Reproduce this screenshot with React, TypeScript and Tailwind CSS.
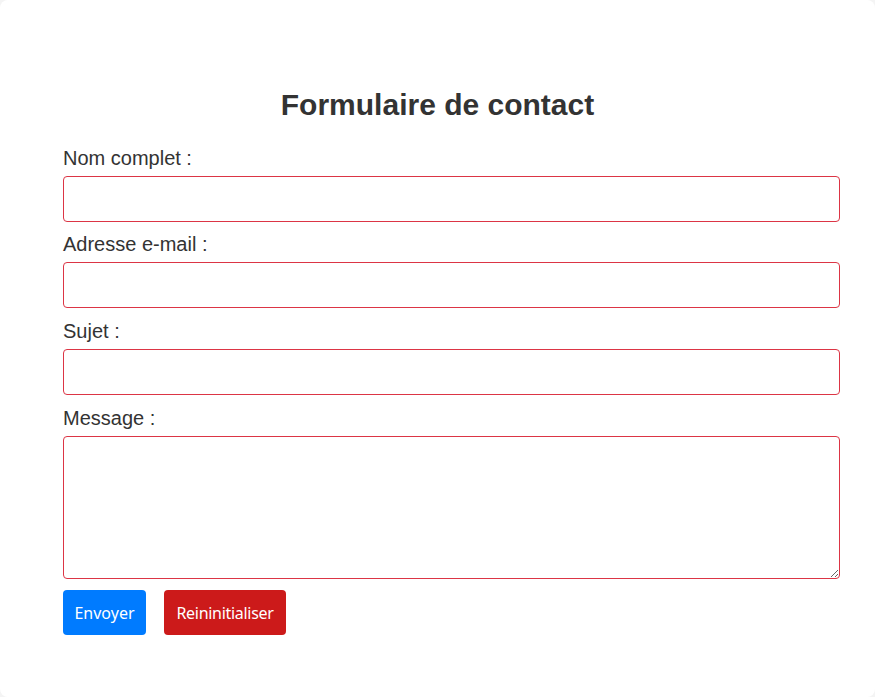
export default function App() {
  const fields = [
    { id: "nom", label: "Nom complet :", type: "text", gap: "mb-[12px]" },
    { id: "email", label: "Adresse e-mail :", type: "email", gap: "mb-[13px]" },
    { id: "sujet", label: "Sujet :", type: "text", gap: "mb-[13px]" },
  ];

  return (
    <div className="min-h-screen bg-[#f4f4f4] font-['Liberation_Sans',Arial,sans-serif] text-[#333]">
      <div className="h-[697px] w-full rounded-lg bg-white px-[63px] pt-[88px]">
        <h2 className="mb-[27px] text-center text-[30px] font-bold leading-[33px]">
          Formulaire de contact
        </h2>
        <form onSubmit={(e) => e.preventDefault()}>
          {fields.map((f) => (
            <div key={f.id}>
              <label htmlFor={f.id} className="mb-[7px] block text-[20px] leading-[21px]">
                {f.label}
              </label>
              <input
                id={f.id}
                type={f.type}
                className={`${f.gap} block h-[46px] w-[777px] rounded border border-[#dc3545] px-2 text-[18px] outline-none`}
              />
            </div>
          ))}
          <label htmlFor="message" className="mb-[7px] block text-[20px] leading-[21px]">
            Message :
          </label>
          <textarea
            id="message"
            className="mb-[11px] block h-[143px] w-[777px] rounded border border-[#dc3545] px-2 text-[18px] outline-none"
          />
          <div className="flex gap-[18px] font-['Noto_Sans',sans-serif]">
            <button
              type="submit"
              className="h-[45px] w-[83px] rounded bg-[#007bff] text-[16px] text-white"
            >
              Envoyer
            </button>
            <button
              type="reset"
              className="h-[45px] w-[122px] rounded bg-[#cc1a1a] text-[16px] tracking-[-0.3px] text-white"
            >
              Reininitialiser
            </button>
          </div>
        </form>
      </div>
    </div>
  );
}
